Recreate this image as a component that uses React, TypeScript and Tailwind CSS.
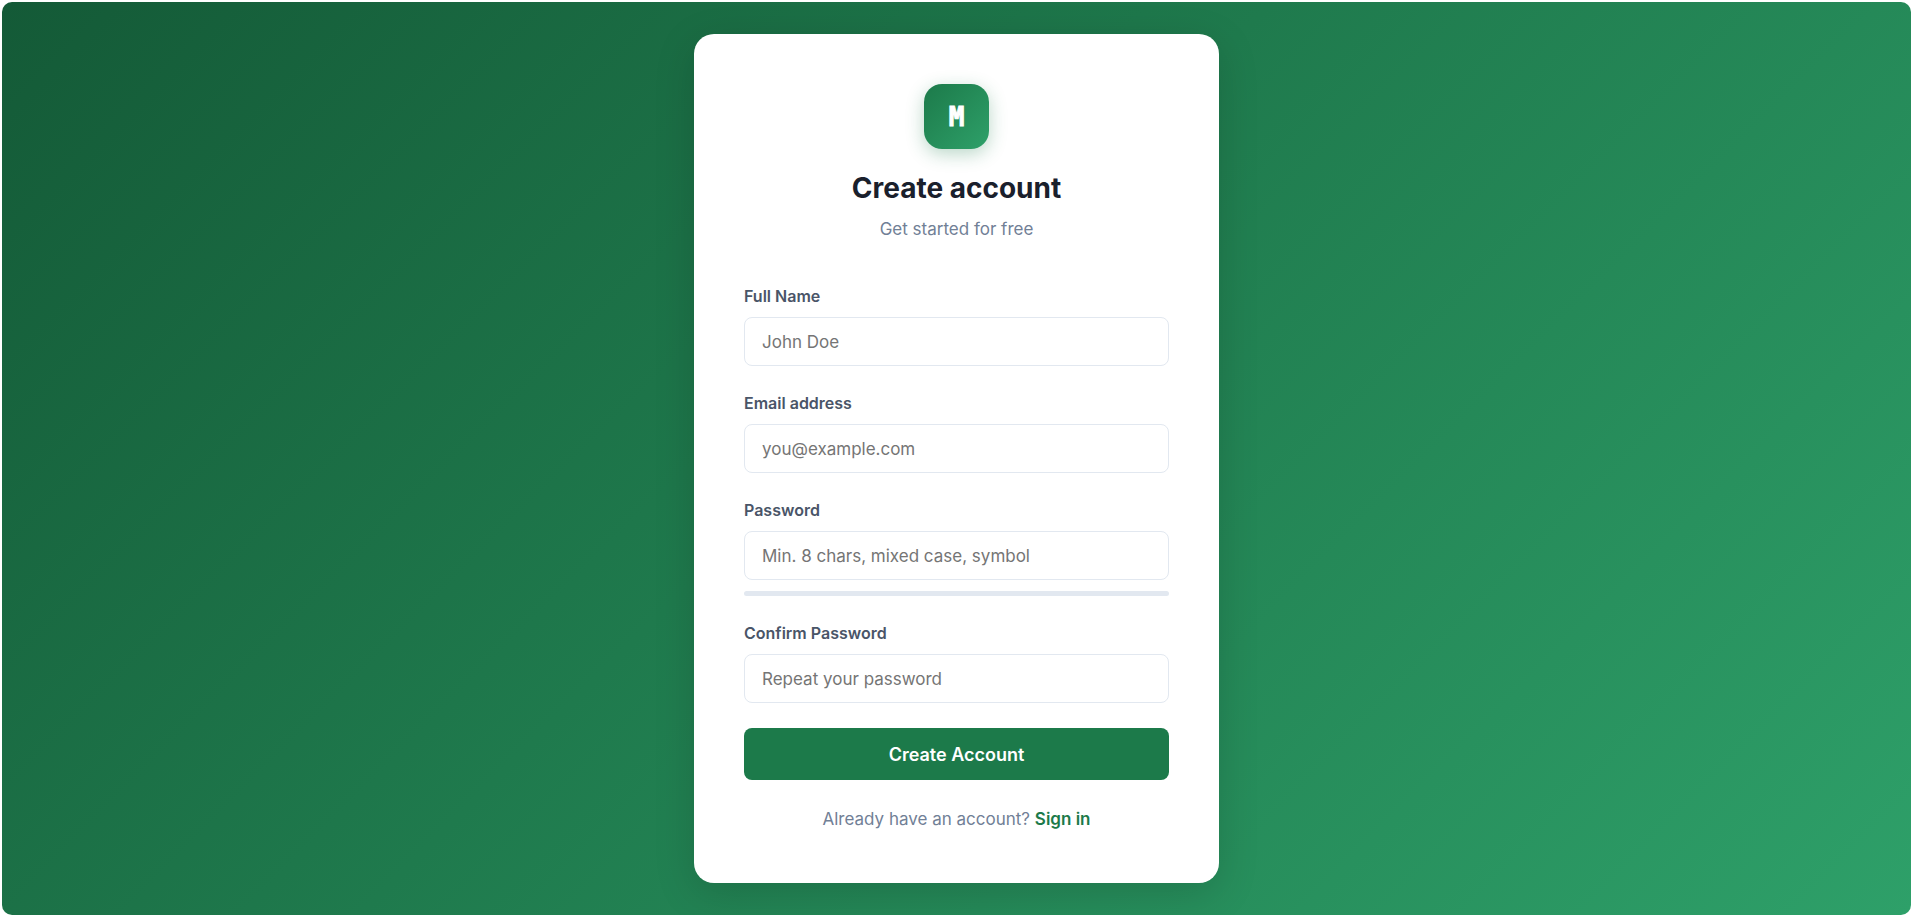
import { useState } from "react";
import type { FormEvent } from "react";

interface Field {
  id: string;
  label: string;
  type: string;
  placeholder: string;
  autoComplete: string;
}

const fields: Field[] = [
  { id: "name", label: "Full Name", type: "text", placeholder: "John Doe", autoComplete: "name" },
  { id: "email", label: "Email address", type: "email", placeholder: "you@example.com", autoComplete: "email" },
  { id: "password", label: "Password", type: "password", placeholder: "Min. 8 chars, mixed case, symbol", autoComplete: "new-password" },
  { id: "confirm", label: "Confirm Password", type: "password", placeholder: "Repeat your password", autoComplete: "new-password" },
];

const strengthColors = ["#e2e8f0", "#e53e3e", "#dd6b20", "#d69e2e", "#1c7a4a"];

function getStrength(password: string) {
  let score = 0;
  if (password.length >= 8) score++;
  if (/[a-z]/.test(password) && /[A-Z]/.test(password)) score++;
  if (/\d/.test(password)) score++;
  if (/[^A-Za-z0-9]/.test(password)) score++;
  return score;
}

export default function App() {
  const [values, setValues] = useState<Record<string, string>>({});

  const strength = getStrength(values.password ?? "");

  const handleSubmit = (e: FormEvent) => {
    e.preventDefault();
  };

  return (
    <div className="flex min-h-screen bg-white pt-0.5 pr-1 pl-0.5 font-['Inter',sans-serif]">
      <main className="flex flex-1 items-center justify-center rounded-[10px] bg-[linear-gradient(135deg,#145a37_0%,#1f7a4d_45%,#2ea069_100%)] px-4 py-8">
        <div className="w-full max-w-[525px] rounded-[20px] bg-white p-[50px] shadow-[0_10px_40px_rgba(0,0,0,0.15)]">
          <div className="mb-[41px] flex flex-col items-center text-center">
            <div className="mb-5 flex size-[65px] items-center justify-center rounded-[18px] bg-linear-135 from-[#1c7a4a] to-[#2ea069] pt-0.5 font-['DejaVu_Sans_Mono',monospace] text-[26px] font-bold text-white shadow-[0_5px_18px_rgba(28,122,74,0.3)] [-webkit-text-stroke:1px_white]">
              M
            </div>
            <h1 className="mb-2 text-[28px] leading-[38px] font-bold text-[#1a202c]">Create account</h1>
            <p className="text-[17px] leading-7 text-[#718096]">Get started for free</p>
          </div>

          <form onSubmit={handleSubmit}>
            {fields.map((field) => (
              <div key={field.id} className="mb-[25px]">
                <label htmlFor={field.id} className="mb-[9px] block text-[16px] leading-6 font-semibold text-[#4a5568]">
                  {field.label}
                </label>
                <input
                  id={field.id}
                  type={field.type}
                  placeholder={field.placeholder}
                  autoComplete={field.autoComplete}
                  value={values[field.id] ?? ""}
                  onChange={(e) => setValues((v) => ({ ...v, [field.id]: e.target.value }))}
                  className="block h-[49px] w-full rounded-lg border border-[#e2e8f0] px-[17px] text-[17px] text-[#1a202c] placeholder:text-[#757575] focus:border-[#1c7a4a] focus:outline-none"
                />
                {field.id === "password" && (
                  <div className="mt-[11px] h-[5px] overflow-hidden rounded-full bg-[#e2e8f0]">
                    <div
                      className="h-full transition-all"
                      style={{ width: `${strength * 25}%`, backgroundColor: strengthColors[strength] }}
                    />
                  </div>
                )}
              </div>
            ))}

            <button
              type="submit"
              className="block h-[52px] w-full rounded-lg bg-[#1c7a4a] text-[18px] font-semibold text-white hover:bg-[#145a37]"
            >
              Create Account
            </button>
          </form>

          <p className="mt-[25px] text-center text-[17px] leading-7 text-[#718096]">
            Already have an account?{" "}
            <a href="#signin" className="font-semibold text-[#1c7a4a] hover:underline">
              Sign in
            </a>
          </p>
        </div>
      </main>
    </div>
  );
}
